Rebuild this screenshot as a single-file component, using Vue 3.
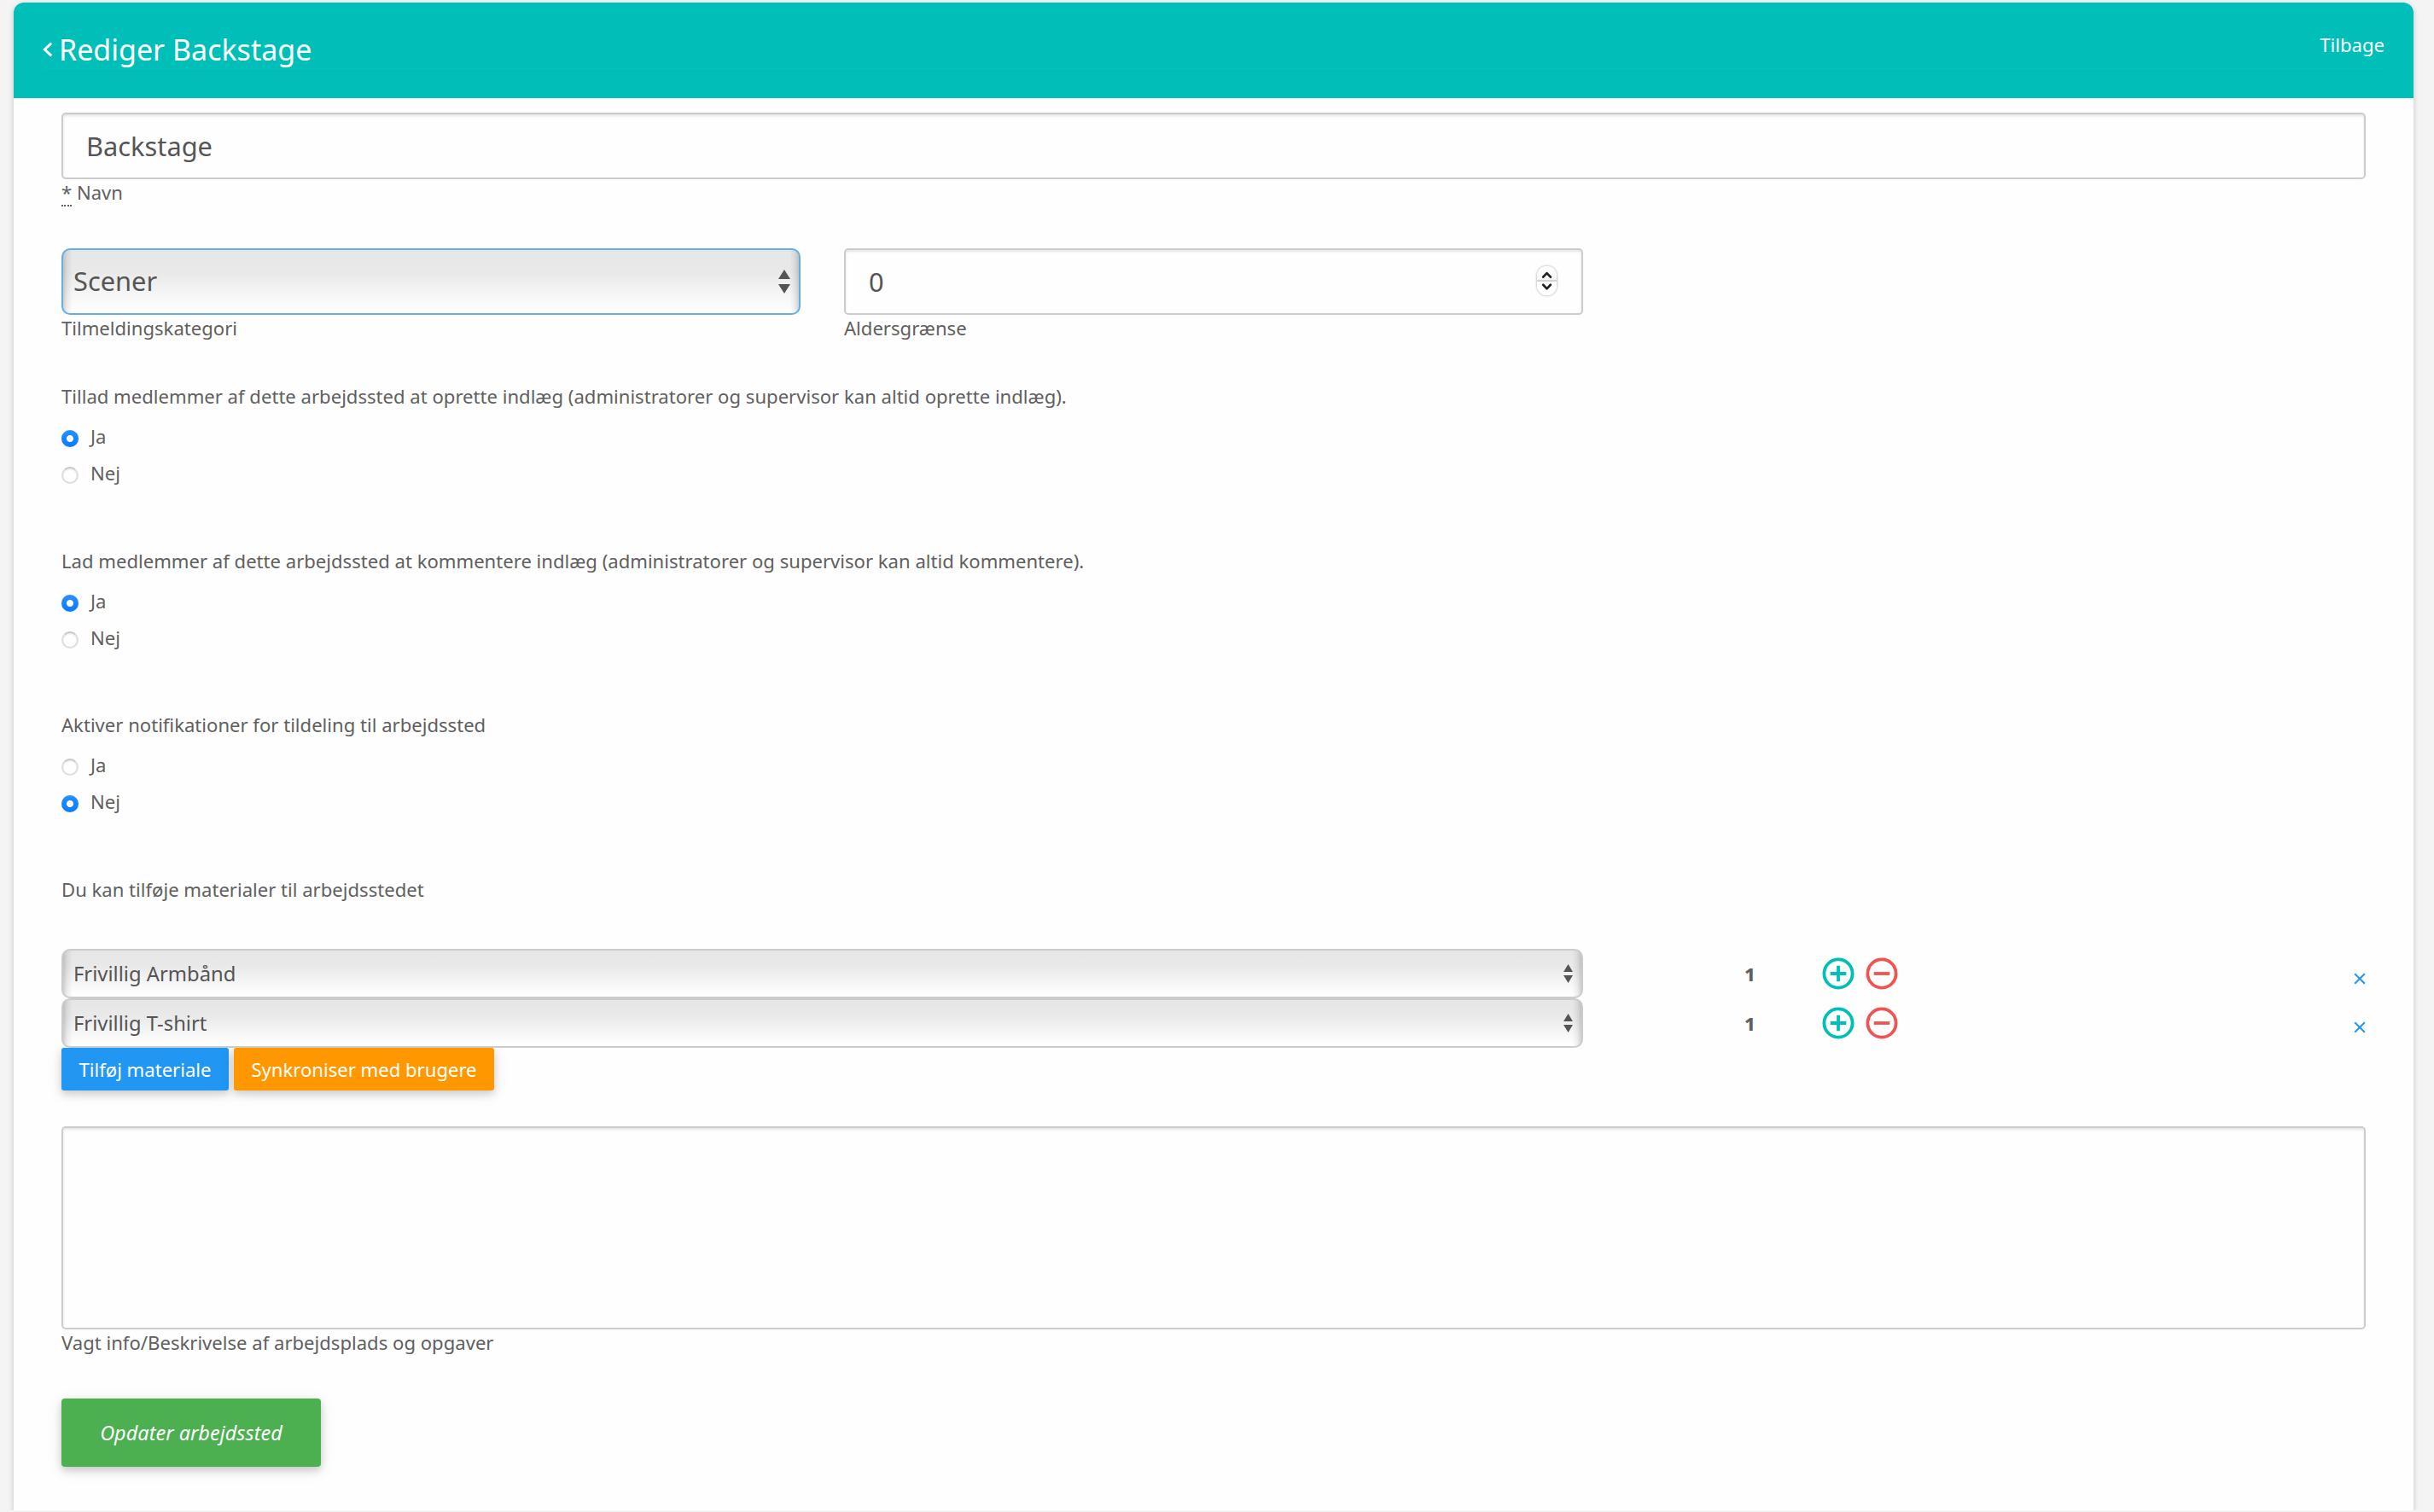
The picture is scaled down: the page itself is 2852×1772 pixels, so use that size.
<template>
  <div class="card">
    <header class="card-header">
      <div class="header-row">
        <a class="title">
          <svg class="chevron" viewBox="0 0 12 18">
            <path d="M10.2 1.6 L2.4 9 L10.2 16.4" />
          </svg>
          <span>Rediger Backstage</span>
        </a>
        <a class="back">Tilbage</a>
      </div>
    </header>

    <form class="form" @submit.prevent>
      <div class="field">
        <input v-model="name" type="text" class="text-input" />
        <label class="label"><abbr>*</abbr> Navn</label>
      </div>

      <div class="field-row">
        <div class="field">
          <div class="select-wrap">
            <select v-model="category" class="select large focused">
              <option>Scener</option>
            </select>
            <svg class="arrows arrows-large" viewBox="0 0 14 28">
              <path class="gap" d="M0 12 H14 V16 H0 Z" />
              <path d="M7 0 L14 11 H0 Z M0 17 H14 L7 28 Z" />
            </svg>
          </div>
          <label class="label">Tilmeldingskategori</label>
        </div>
        <div class="field">
          <div class="select-wrap">
            <input v-model="ageLimit" type="text" class="text-input" />
            <span class="spinner">
              <svg viewBox="0 0 24 34">
                <path d="M7.5 12.5 L12 7.7 L16.5 12.5 M7.5 22 L12 26.8 L16.5 22" />
              </svg>
            </span>
          </div>
          <label class="label">Aldersgrænse</label>
        </div>
      </div>

      <div v-for="group in groups" :key="group.id" class="radio-group">
        <p class="label">{{ group.text }}</p>
        <label v-for="option in options" :key="option" class="radio-label">
          <input v-model="group.value" type="radio" class="radio" :name="group.id" :value="option" />
          <span>{{ option }}</span>
        </label>
      </div>

      <p class="label">Du kan tilføje materialer til arbejdsstedet</p>

      <div class="materials">
        <div v-for="item in materials" :key="item.name" class="material">
          <div class="select-wrap">
            <select v-model="item.name" class="select">
              <option>{{ item.name }}</option>
            </select>
            <svg class="arrows" viewBox="0 0 11 22">
              <path d="M5.5 0 L11 9 H0 Z M0 13 H11 L5.5 22 Z" />
            </svg>
          </div>
          <span class="count">{{ item.count }}</span>
          <div class="counters">
            <svg class="round-icon plus" viewBox="0 0 38 38" @click="item.count++">
              <circle cx="19" cy="19" r="16.6" />
              <path d="M9.7 19 H28.3 M19 9.7 V28.3" />
            </svg>
            <svg class="round-icon minus" viewBox="0 0 38 38" @click="item.count--">
              <circle cx="19" cy="19" r="16.6" />
              <path d="M9.7 19 H28.3" />
            </svg>
          </div>
          <svg class="remove" viewBox="0 0 14 14">
            <path d="M1.2 1.2 L12.8 12.8 M12.8 1.2 L1.2 12.8" />
          </svg>
        </div>
      </div>

      <div class="buttons">
        <button type="button" class="btn btn-blue">Tilføj materiale</button>
        <button type="button" class="btn btn-orange">Synkroniser med brugere</button>
      </div>

      <div class="field">
        <textarea v-model="description" class="text-input textarea"></textarea>
        <label class="label">Vagt info/Beskrivelse af arbejdsplads og opgaver</label>
      </div>

      <button type="submit" class="btn btn-submit">Opdater arbejdssted</button>
    </form>
  </div>
</template>

<script setup>
import { ref } from 'vue'

const name = ref('Backstage')
const category = ref('Scener')
const ageLimit = ref('0')
const description = ref('')
const options = ['Ja', 'Nej']

const groups = ref([
  {
    id: 'posts',
    text: 'Tillad medlemmer af dette arbejdssted at oprette indlæg (administratorer og supervisor kan altid oprette indlæg).',
    value: 'Ja'
  },
  {
    id: 'comments',
    text: 'Lad medlemmer af dette arbejdssted at kommentere indlæg (administratorer og supervisor kan altid kommentere).',
    value: 'Ja'
  },
  {
    id: 'notifications',
    text: 'Aktiver notifikationer for tildeling til arbejdssted',
    value: 'Nej'
  }
])

const materials = ref([
  { name: 'Frivillig Armbånd', count: 1 },
  { name: 'Frivillig T-shirt', count: 1 }
])
</script>

<style>
body {
  background: #f4f4f4;
}
</style>

<style scoped>
.card,
.card * {
  box-sizing: border-box;
}

.card {
  margin: 3px 24px 0 16px;
  height: 1767px;
  background: #fefefe;
  border-radius: 12px 12px 0 0;
  box-shadow: 0 2px 6px rgba(0, 0, 0, 0.2);
  font-family: 'Noto Sans', sans-serif;
  font-size: 22.1px;
  line-height: 30px;
  color: #606060;
}

.card-header {
  height: 112px;
  padding: 32px 34px 0;
  background: #00beb8;
  border-radius: 12px 12px 0 0;
  color: #fff;
}

.header-row {
  display: flex;
  justify-content: space-between;
  height: 46px;
  border-bottom: 1px solid #08c0ba;
}

.title {
  display: flex;
  align-items: center;
  gap: 7px;
  font-size: 34px;
  line-height: 46px;
}

.chevron {
  width: 12px;
  height: 18px;
  fill: none;
  stroke: #fff;
  stroke-width: 3;
}

.back {
  line-height: 34px;
}

.form {
  padding: 17px 56px 0;
}

.field {
  display: flex;
  flex-direction: column;
}

.field-row {
  display: grid;
  grid-template-columns: 866px 866px;
  gap: 51px;
  margin: 51px 0 50px;
}

.label {
  display: block;
  margin: 0;
  line-height: 30px;
}

abbr {
  border-bottom: 2px dotted #606060;
}

.text-input {
  display: block;
  width: 100%;
  height: 78px;
  margin: 0;
  padding: 0 27px;
  border: 2px solid #ccc;
  border-radius: 5px;
  outline: none;
  background: #fefefe;
  box-shadow: inset 0 2px 3px rgba(0, 0, 0, 0.1);
  font-family: inherit;
  font-size: 30.8px;
  color: #555;
}

.textarea {
  height: 238px;
  resize: none;
}

.select-wrap {
  position: relative;
}

.select {
  appearance: none;
  display: block;
  width: 100%;
  height: 58px;
  margin: 0;
  padding: 0 12px;
  border: 2px solid #ccc;
  border-radius: 10px;
  outline: none;
  background:
    linear-gradient(to right, rgba(0, 0, 0, 0.17), rgba(0, 0, 0, 0.06) 5px, transparent 11px, transparent calc(100% - 11px), rgba(0, 0, 0, 0.06) calc(100% - 5px), rgba(0, 0, 0, 0.17)),
    linear-gradient(#e6e6e6, #e9e9e9 35%, #f3f3f3 62%, #fefefe 95%);
  font-family: inherit;
  font-size: 23.8px;
  color: #555;
}

.select.large {
  height: 78px;
  padding-bottom: 2px;
  font-size: 30.8px;
}

.select.focused {
  border-color: #65aee8;
}

.arrows {
  position: absolute;
  top: 18px;
  right: 12px;
  width: 11px;
  height: 22px;
  fill: #555;
  pointer-events: none;
}

.arrows-large {
  top: 25px;
  width: 14px;
  height: 28px;
}

.gap {
  fill: #f1f1f1;
}

.spinner {
  position: absolute;
  top: 21px;
  right: 31px;
  width: 23px;
  height: 34px;
  border-radius: 11px;
  background: linear-gradient(#fff, #f5f5f5 46%, #d4d4d4 47%, #d4d4d4 53%, #fff 54%);
  box-shadow: 0 0 3px rgba(0, 0, 0, 0.4);
}

.spinner svg {
  display: block;
  width: 23px;
  height: 34px;
  fill: none;
  stroke: #222;
  stroke-width: 2.8;
  stroke-linecap: round;
  stroke-linejoin: round;
}

.radio-group {
  margin-bottom: 65.5px;
}

.radio-group .label {
  margin-bottom: 11px;
}

.radio-label {
  display: flex;
  align-items: center;
  gap: 14px;
  height: 43px;
}

.radio-label span {
  margin-top: -1px;
}

.radio {
  appearance: none;
  width: 20px;
  height: 20px;
  margin: 5px 0 0;
  border: 2px solid #ddd;
  border-top-color: #c8c8c8;
  border-radius: 50%;
  background: #fefefe;
  box-shadow: inset 0 1px 2px rgba(0, 0, 0, 0.1);
}

.radio:checked {
  border: none;
  background: radial-gradient(circle, #fff 3.5px, transparent 4.5px), linear-gradient(#2a8fff, #0a7aff);
  box-shadow: 0 0 1px rgba(10, 122, 255, 0.4);
}

.materials {
  margin-top: 55.5px;
}

.material {
  display: grid;
  grid-template-columns: 1783px 391px 1fr 14px;
  align-items: center;
  height: 58px;
}

.count {
  justify-self: center;
  margin-top: -1px;
  font-weight: 800;
  color: #606060;
}

.counters {
  display: flex;
  gap: 13px;
  margin-left: -111px;
}

.round-icon {
  width: 38px;
  height: 38px;
  margin-top: -1px;
  fill: none;
  stroke-width: 3.8;
}

.plus {
  stroke: #00beb8;
}

.minus {
  stroke: #f05350;
}

.remove {
  width: 14px;
  height: 14px;
  margin-top: 11px;
  fill: none;
  stroke: #2196f3;
  stroke-width: 2;
}

.material + .material .remove {
  margin-top: 9px;
}

.buttons {
  display: flex;
  gap: 6px;
  margin-bottom: 42px;
}

.btn {
  height: 50px;
  margin: 0;
  padding: 0;
  border: none;
  border-radius: 3px;
  box-shadow: 0 4px 10px rgba(0, 0, 0, 0.16), 0 4px 20px rgba(0, 0, 0, 0.08);
  font-family: inherit;
  font-size: 22.1px;
  color: #fff;
}

.btn-blue {
  width: 196px;
  background: #2196f3;
}

.btn-orange {
  width: 305px;
  background: #ff9800;
}

.btn-submit {
  display: block;
  width: 304px;
  height: 80px;
  margin-top: 51px;
  border-radius: 4px;
  background: #4caf50;
  box-shadow: 0 4px 10px rgba(0, 0, 0, 0.18), 0 4px 20px rgba(0, 0, 0, 0.08);
  font-size: 23.5px;
  font-style: italic;
}
</style>
